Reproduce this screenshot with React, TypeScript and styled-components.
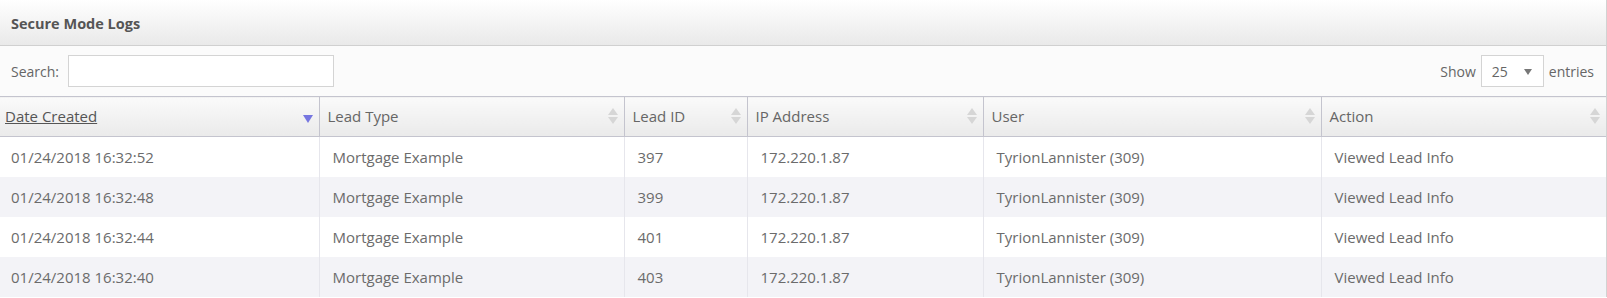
import styled, { createGlobalStyle } from 'styled-components'

const GlobalStyles = createGlobalStyle`
  body {
    margin: 0;
    font-family: 'Open Sans', 'Liberation Sans', sans-serif;
    background: #ffffff;
  }
  * {
    box-sizing: border-box;
  }
`

const Panel = styled.div`
  width: 1607px;
  border-right: 1px solid #d2d2d2;
  background: #fff;
`

const TitleBar = styled.div`
  height: 46px;
  padding: 1px 11px 0;
  display: flex;
  align-items: center;
  font-size: 14.5px;
  font-weight: 700;
  color: #555;
  background: linear-gradient(to bottom, #ffffff, #e9e9e9);
  border-bottom: 1px solid #d0d0d0;
`

const Toolbar = styled.div`
  height: 50px;
  padding: 0 12px 0 11px;
  display: flex;
  align-items: center;
  justify-content: space-between;
  background: #fbfbfb;
  font-size: 14px;
  color: #666;
`

const Field = styled.label<{ $gap: number }>`
  display: flex;
  align-items: center;
  gap: ${({ $gap }) => $gap}px;
`

const SearchInput = styled.input`
  width: 266px;
  height: 32px;
  border: 1px solid #d4d4d4;
  background: #fff;
  outline: none;
`

const SelectBox = styled.div`
  position: relative;
  width: 63px;
  height: 32px;
  border: 1px solid #d4d4d4;
  background: #fff;
  display: flex;
  align-items: center;
  padding-left: 10px;
  font-size: 14px;
  color: #666;
`

const SelectCaret = styled.span`
  position: absolute;
  right: 11px;
  top: 13px;
  width: 0;
  height: 0;
  border-left: 4px solid transparent;
  border-right: 4px solid transparent;
  border-top: 6px solid #777;
`

const Table = styled.table`
  width: 100%;
  border-collapse: collapse;
  table-layout: fixed;
`

const HeadCell = styled.th<{ $first?: boolean; $w: number }>`
  position: relative;
  width: ${({ $w }) => $w}px;
  height: 40px;
  padding: 0 0 2px ${({ $first }) => ($first ? 5 : 8)}px;
  text-align: left;
  font-size: 15px;
  font-weight: 400;
  color: #666;
  background: linear-gradient(to bottom, #fafafa, #eaeaea);
  border-top: 1px solid #c4c4ce;
  border-bottom: 1px solid #c4c4ce;
  border-left: ${({ $first }) => ($first ? 'none' : '1px solid #c4c4ce')};
`

const SortedLabel = styled.span`
  color: #555;
  text-decoration: underline;
`

const SortBoth = styled.span`
  position: absolute;
  right: 6px;
  top: 11px;
  width: 10px;
  height: 18px;
  display: flex;
  flex-direction: column;
  align-items: center;
  gap: 2px;
  &::before,
  &::after {
    content: '';
    width: 0;
    height: 0;
    border-left: 5px solid transparent;
    border-right: 5px solid transparent;
  }
  &::before {
    border-bottom: 7px solid #d6d6d6;
  }
  &::after {
    border-top: 7px solid #d6d6d6;
  }
`

const SortDesc = styled.span`
  position: absolute;
  right: 6px;
  top: 18px;
  width: 0;
  height: 0;
  border-left: 5px solid transparent;
  border-right: 5px solid transparent;
  border-top: 8px solid #7676e0;
`

const Row = styled.tr<{ $odd: boolean }>`
  background: ${({ $odd }) => ($odd ? '#f3f3f7' : '#ffffff')};
`

const Cell = styled.td<{ $first?: boolean }>`
  height: 40px;
  padding: 0 0 0 ${({ $first }) => ($first ? 11 : 13)}px;
  font-size: 15px;
  color: #6b6b6b;
  white-space: nowrap;
  border-left: ${({ $first }) => ($first ? 'none' : '1px solid #e6e6ec')};
`

const columns = [
  { label: 'Date Created', width: 319 },
  { label: 'Lead Type', width: 305 },
  { label: 'Lead ID', width: 123 },
  { label: 'IP Address', width: 236 },
  { label: 'User', width: 338 },
  { label: 'Action', width: 285 },
]

const rows = [
  ['01/24/2018 16:32:52', 'Mortgage Example', '397', '172.220.1.87', 'TyrionLannister (309)', 'Viewed Lead Info'],
  ['01/24/2018 16:32:48', 'Mortgage Example', '399', '172.220.1.87', 'TyrionLannister (309)', 'Viewed Lead Info'],
  ['01/24/2018 16:32:44', 'Mortgage Example', '401', '172.220.1.87', 'TyrionLannister (309)', 'Viewed Lead Info'],
  ['01/24/2018 16:32:40', 'Mortgage Example', '403', '172.220.1.87', 'TyrionLannister (309)', 'Viewed Lead Info'],
]

function App() {
  return (
    <>
      <GlobalStyles />
      <Panel>
        <TitleBar>Secure Mode Logs</TitleBar>
        <Toolbar>
          <Field $gap={9}>
            Search:
            <SearchInput type="text" />
          </Field>
          <Field $gap={5}>
            Show
            <SelectBox>
              25
              <SelectCaret />
            </SelectBox>
            entries
          </Field>
        </Toolbar>
        <Table>
          <thead>
            <tr>
              {columns.map((col, i) => (
                <HeadCell key={col.label} $first={i === 0} $w={col.width}>
                  {i === 0 ? <SortedLabel>{col.label}</SortedLabel> : col.label}
                  {i === 0 ? <SortDesc /> : <SortBoth />}
                </HeadCell>
              ))}
            </tr>
          </thead>
          <tbody>
            {rows.map((row, r) => (
              <Row key={r} $odd={r % 2 === 1}>
                {row.map((value, c) => (
                  <Cell key={c} $first={c === 0}>
                    {value}
                  </Cell>
                ))}
              </Row>
            ))}
          </tbody>
        </Table>
      </Panel>
    </>
  )
}

export default App
